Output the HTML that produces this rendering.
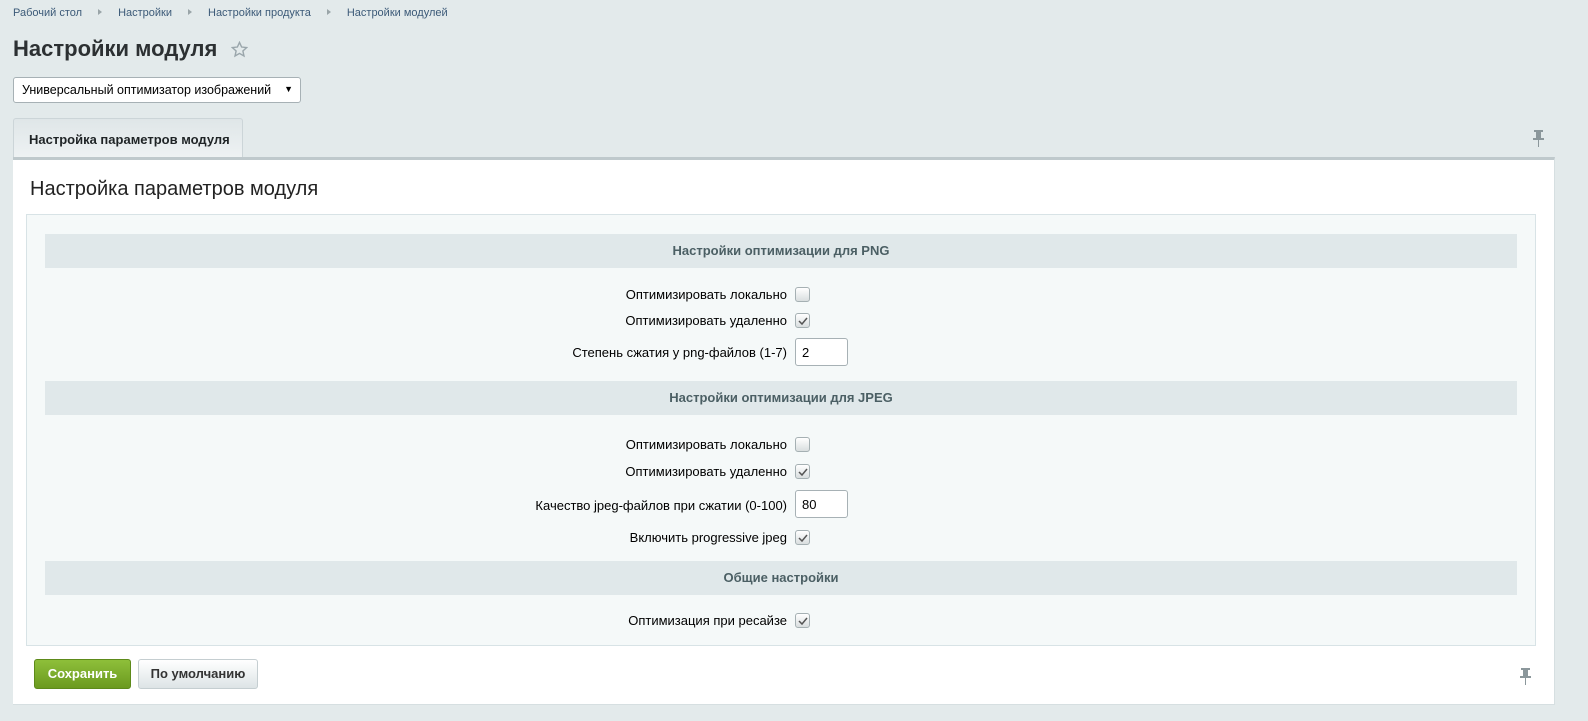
<!DOCTYPE html>
<html><head><meta charset="utf-8"><style>
*{margin:0;padding:0;box-sizing:border-box}
body{width:1588px;height:721px;background:#e3eaeb;font-family:"Liberation Sans",Arial,sans-serif;position:relative;overflow:hidden;color:#000}
.a{position:absolute}
.bc{top:7px;left:13px;font-size:11px;color:#3c5a78;white-space:nowrap}
.bc span{margin-right:16px}
.bc i{display:inline-block;width:0;height:0;border-left:4px solid #9aa5a8;border-top:3.5px solid transparent;border-bottom:3.5px solid transparent;margin-right:16px;vertical-align:1px}
h1{position:absolute;left:13px;top:36px;font-size:22px;font-weight:bold;color:#2c3032}
.sel{left:13px;top:77px;width:288px;height:26px;background:#fff;border:1px solid #a7b1b5;border-radius:3px;font-size:12.5px;padding:5px 0 0 8px}
.tab{left:13px;top:118px;width:230px;height:40px;background:linear-gradient(#dfe6e8,#eef2f3);border:1px solid #ccd5d8;border-bottom:none;border-radius:3px 3px 0 0;font-size:13px;font-weight:bold;padding:13px 0 0 15px;color:#1f2426}
.panel{left:13px;top:157px;width:1542px;height:548px;background:#fff;border-top:3px solid #bfc9cc;border-right:1px solid #d6dfe1;border-bottom:1px solid #d6dfe1}
.inner{left:26px;top:214px;width:1510px;height:432px;background:#f5f9f9;border:1px solid #d8e3e6}
.hd{left:45px;width:1472px;height:34px;background:#e0e8ea;font-size:13px;font-weight:bold;color:#4b5f64;text-align:center;line-height:34px}
.lb{width:787px;left:0;text-align:right;font-size:13px;color:#000}
.cb{left:795px;width:15px;height:15px;border:1px solid #a5b0b3;border-radius:3px;background:linear-gradient(#fff,#d9dedf)}
.cb svg{position:absolute;left:2px;top:2px}
.inp{left:795px;width:53px;height:28px;background:#fff;border:1px solid #a7b1b5;border-radius:3px;font-size:13px;padding:6px 0 0 6px}
</style></head><body>
<div class="a bc"><span>Рабочий стол</span><i></i><span>Настройки</span><i></i><span>Настройки продукта</span><i></i><span>Настройки модулей</span></div>
<h1>Настройки модуля</h1>
<svg class="a" style="left:231px;top:41px" width="17" height="17" viewBox="0 0 24 24"><path d="M12 2l3 6.5 7 .8-5.2 4.8 1.5 7L12 17.5 5.7 21.1l1.5-7L2 9.3l7-.8z" fill="none" stroke="#9aa6ab" stroke-width="2"/></svg>
<div class="a sel">Универсальный оптимизатор изображений<span style="position:absolute;right:7px;top:6px;font-size:9px">▼</span></div>
<div class="a tab">Настройка параметров модуля</div>
<svg class="a" style="left:1533px;top:130px" width="11" height="17" viewBox="0 0 11 17"><rect x="1" y="0" width="9" height="2" fill="#8b979b"/><rect x="3" y="2" width="5" height="6" fill="#8b979b"/><rect x="0" y="8" width="11" height="2" fill="#8b979b"/><rect x="5" y="10" width="1" height="7" fill="#8b979b"/></svg>
<div class="a panel"></div>
<div class="a" style="left:30px;top:178px;font-size:20px;color:#222">Настройка параметров модуля</div>
<div class="a inner"></div>
<div class="a hd" style="top:234px">Настройки оптимизации для PNG</div>
<div class="a lb" style="top:287px">Оптимизировать локально</div><div class="a cb" style="top:287px"></div>
<div class="a lb" style="top:313px">Оптимизировать удаленно</div><div class="a cb" style="top:313px"><svg width="10" height="10"><path d="M1 5l3 3 5-6" fill="none" stroke="#555" stroke-width="1.5"/></svg></div>
<div class="a lb" style="top:345px">Степень сжатия у png-файлов (1-7)</div><div class="a inp" style="top:338px">2</div>
<div class="a hd" style="top:381px">Настройки оптимизации для JPEG</div>
<div class="a lb" style="top:437px">Оптимизировать локально</div><div class="a cb" style="top:437px"></div>
<div class="a lb" style="top:464px">Оптимизировать удаленно</div><div class="a cb" style="top:464px"><svg width="10" height="10"><path d="M1 5l3 3 5-6" fill="none" stroke="#555" stroke-width="1.5"/></svg></div>
<div class="a lb" style="top:498px">Качество jpeg-файлов при сжатии (0-100)</div><div class="a inp" style="top:490px">80</div>
<div class="a lb" style="top:530px">Включить progressive jpeg</div><div class="a cb" style="top:530px"><svg width="10" height="10"><path d="M1 5l3 3 5-6" fill="none" stroke="#555" stroke-width="1.5"/></svg></div>
<div class="a hd" style="top:561px">Общие настройки</div>
<div class="a lb" style="top:613px">Оптимизация при ресайзе</div><div class="a cb" style="top:613px"><svg width="10" height="10"><path d="M1 5l3 3 5-6" fill="none" stroke="#555" stroke-width="1.5"/></svg></div>
<div class="a" style="left:34px;top:659px;width:97px;height:30px;background:linear-gradient(#8ebf3a,#6b9a1f);border-radius:3px;border:1px solid #5d8a1a;color:#fff;font-size:13px;font-weight:bold;text-align:center;line-height:28px">Сохранить</div>
<div class="a" style="left:138px;top:659px;width:120px;height:30px;background:linear-gradient(#fff,#dde4e6);border-radius:3px;border:1px solid #c5ced1;color:#333;font-size:13px;font-weight:bold;text-align:center;line-height:28px">По умолчанию</div>
<svg class="a" style="left:1520px;top:668px" width="11" height="17" viewBox="0 0 11 17"><rect x="1" y="0" width="9" height="2" fill="#8b979b"/><rect x="3" y="2" width="5" height="6" fill="#8b979b"/><rect x="0" y="8" width="11" height="2" fill="#8b979b"/><rect x="5" y="10" width="1" height="7" fill="#8b979b"/></svg>
</body></html>
